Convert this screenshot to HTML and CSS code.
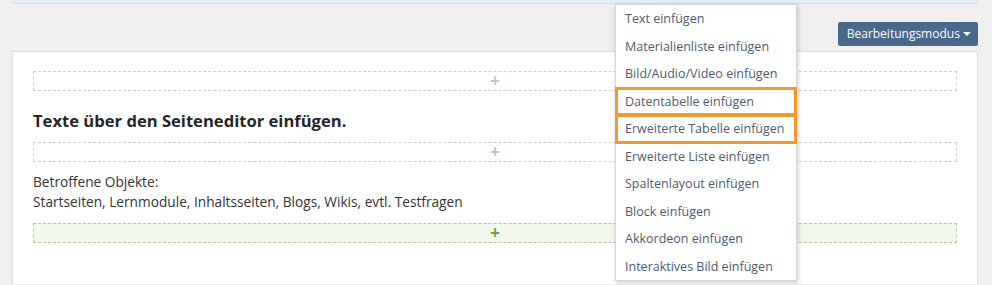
FILE: index.html
```html
<!doctype html>
<html lang="de">
    <head>
        <meta charset="UTF-8">
        <meta name="viewport" content="width=device-width, initial-scale=1.0">
        <title>Seiteneditor</title>
        <link rel="stylesheet" href="styles.css">
    </head>
    <body>
        <div class="topbar"></div>

        <div class="toolbar">
            <button class="mode-button">Bearbeitungsmodus <span class="caret"></span></button>
        </div>

        <div class="panel">
            <div class="dropzone"><span class="plus">+</span></div>

            <h2 class="page-title">Texte über den Seiteneditor einfügen.</h2>

            <div class="dropzone"><span class="plus">+</span></div>

            <p class="page-text">
                Betroffene Objekte:<br>
                Startseiten, Lernmodule, Inhaltsseiten, Blogs, Wikis, evtl. Testfragen
            </p>

            <div class="dropzone active"><span class="plus">+</span></div>
        </div>

        <!-- Menü zum Einfügen -->
        <ul class="insert-menu">
            <li>Text einfügen</li>
            <li>Materialienliste einfügen</li>
            <li>Bild/Audio/Video einfügen</li>
            <li class="marked">Datentabelle einfügen</li>
            <li class="marked">Erweiterte Tabelle einfügen</li>
            <li>Erweiterte Liste einfügen</li>
            <li>Spaltenlayout einfügen</li>
            <li>Block einfügen</li>
            <li>Akkordeon einfügen</li>
            <li>Interaktives Bild einfügen</li>
        </ul>
    </body>
</html>
```

FILE: styles.css
```css
:root {
    --page-bg: #efefef;
    --text-color: #333333;
    --menu-text: #4d5b6e;
    --button-bg: #4a678c;
    --mark-color: #ee9a2e;
}
* {
    box-sizing: border-box;
}
html, body {
    height: 285px;
    overflow: hidden;
}
body {
    margin: 0;
    position: relative;
    font-family: "Open Sans", "Liberation Sans", sans-serif;
    font-size: 13.7px;
    color: var(--text-color);
    background-color: var(--page-bg);
}

/* Leiste oben */
.topbar {
    height: 4px;
    margin: 0 14px 0 12px;
    background-color: #e2ecf4;
    border-bottom: 1px solid #d3e0ea;
}

.toolbar {
    display: flex;
    justify-content: flex-end;
    padding: 18px 14px 5px 12px;
}

.mode-button {
    height: 24px;
    padding: 0 7px 0 9px;
    border: 0;
    border-radius: 2px;
    background-color: var(--button-bg);
    color: #fff;
    font-family: inherit;
    font-size: 12px;
    line-height: 24px;
}

.caret {
    display: inline-block;
    width: 0;
    height: 0;
    margin-left: 0;
    vertical-align: 2px;
    border-top: 4px solid #fff;
    border-left: 4px solid transparent;
    border-right: 4px solid transparent;
}

/* Inhalt */
.panel {
    height: 233px;
    margin: 0 14px 0 12px;
    padding: 19px 20px;
    background-color: #fff;
    border: 1px solid #dddddd;
    border-bottom: 0;
}

.dropzone {
    height: 20px;
    border: 1px dashed #cfcfcf;
    text-align: center;
    line-height: 17px;
}

.plus {
    color: #c4c4c4;
    font-size: 17px;
    font-weight: 700;
}

.dropzone.active {
    background-color: #f1f7ea;
    border-color: #b9c9a8;
}

.dropzone.active .plus {
    color: #6da044;
}

.page-title {
    margin: 18px 0 9px;
    font-size: 16.6px;
    font-weight: 700;
    line-height: 24px;
    color: #262626;
}

.page-text {
    margin: 10px 0 11px;
    line-height: 20px;
}

/* Menü */
.insert-menu {
    position: absolute;
    left: 615px;
    top: 4px;
    width: 182px;
    margin: 0;
    padding: 0;
    list-style: none;
    background-color: #fff;
    border: 1px solid #d6d6d6;
    box-shadow: 1px 2px 5px rgba(0, 0, 0, 0.2);
}

.insert-menu li {
    height: 27.5px;
    padding-left: 9px;
    font-size: 12.5px;
    line-height: 27.5px;
    color: var(--menu-text);
    white-space: nowrap;
}

.insert-menu li.marked {
    outline: 3px solid var(--mark-color);
    outline-offset: -2px;
}
```
